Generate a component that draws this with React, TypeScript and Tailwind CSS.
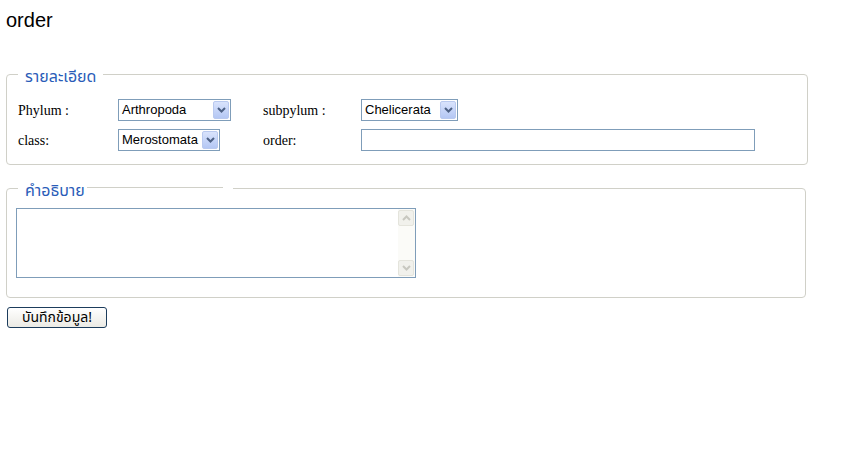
import React from "react";

function Chevron({ color = "#4d6185" }: { color?: string }) {
  return (
    <svg width="9" height="6" viewBox="0 0 9 6">
      <path d="M1 1 L4.5 4.5 L8 1" fill="none" stroke={color} strokeWidth="2" />
    </svg>
  );
}

function Select({ value, width }: { value: string; width: string }) {
  return (
    <div className={`flex h-[22px] items-stretch border border-[#7f9db9] bg-white ${width}`}>
      <span className="flex-1 pl-[3px] text-[13px] leading-[20px] text-black font-['Liberation_Sans',Arial,sans-serif] whitespace-nowrap overflow-hidden">
        {value}
      </span>
      <span className="m-[1px] flex w-[16px] items-center justify-center rounded-[2px] border border-[#b9c9ef] bg-gradient-to-b from-[#d9e3fc] to-[#b4c7f4]">
        <Chevron />
      </span>
    </div>
  );
}

export default function App() {
  const thai = "font-['Tahoma','Noto_Sans_Thai','Noto_Sans','DejaVu_Sans',sans-serif]";
  const serif = "font-['Liberation_Serif','Times_New_Roman',serif] text-[14px] text-black";
  return (
    <div className="min-h-[450px] w-[843px] bg-white pl-[6px] pt-[9px]">
      <h1 className="text-[20px] leading-[23px] text-black font-['Liberation_Sans',Arial,sans-serif]">
        order
      </h1>

      <fieldset className="mt-[31px] w-[802px] rounded-[4px] border border-[#d0d0c8] pl-[11px] pr-[12px] pt-[14px] pb-[13px]">
        <legend className={`h-[22px] px-[7px] pt-[6px] text-[16px] leading-[16px] text-[#2a5cb8] ${thai}`}>
          รายละเอียด
        </legend>
        <div className="grid grid-cols-[100px_145px_98px_1fr] gap-y-[8px]">
          <div className={`flex items-center ${serif}`}>Phylum :</div>
          <div>
            <Select value="Arthropoda" width="w-[113px]" />
          </div>
          <div className={`flex items-center ${serif}`}>subpylum :</div>
          <div>
            <Select value="Chelicerata" width="w-[97px]" />
          </div>

          <div className={`flex items-center ${serif}`}>class:</div>
          <div>
            <Select value="Merostomata" width="w-[102px]" />
          </div>
          <div className={`flex items-center ${serif}`}>order:</div>
          <div>
            <input
              type="text"
              className="block h-[22px] w-[394px] border border-[#7f9db9] bg-white outline-none"
            />
          </div>
        </div>
      </fieldset>

      <fieldset className="mt-[12px] w-[800px] rounded-[4px] border border-[#d0d0c8] pl-[9px] pr-[9px] pt-[9px] pb-[19px]">
        <legend className={`ml-[2px] flex h-[22px] items-start ${thai}`}>
          <span className="pl-[7px] pr-[2px] pt-[6px] text-[16px] leading-[16px] text-[#2a5cb8]">
            คำอธิบาย
          </span>
          <span className="mt-[10px] h-[1px] w-[136px] bg-[#d0d0c8]" />
          <span className="w-[10px]" />
        </legend>
        <div className="flex h-[70px] w-[400px] border border-[#7f9db9] bg-white">
          <textarea className="flex-1 resize-none overflow-hidden outline-none" />
          <div className="flex w-[17px] flex-col justify-between bg-[#fbfbf8] py-[1px] pr-[1px]">
            <span className="flex h-[16px] items-center justify-center rounded-[2px] border border-[#e4e4dc] bg-[#f1f1ec]">
              <svg width="9" height="6" viewBox="0 0 9 6">
                <path d="M1 5 L4.5 1.5 L8 5" fill="none" stroke="#c8c8c0" strokeWidth="2" />
              </svg>
            </span>
            <span className="flex h-[16px] items-center justify-center rounded-[2px] border border-[#e4e4dc] bg-[#f1f1ec]">
              <Chevron color="#c8c8c0" />
            </span>
          </div>
        </div>
      </fieldset>

      <button
        className={`ml-[1px] mt-[9px] block h-[21px] w-[100px] rounded-[3px] border border-[#1c3c5c] bg-gradient-to-b from-[#ffffff] to-[#ebeae4] text-[14px] leading-[17px] text-black ${thai}`}
      >
        บันทึกข้อมูล!
      </button>
    </div>
  );
}
